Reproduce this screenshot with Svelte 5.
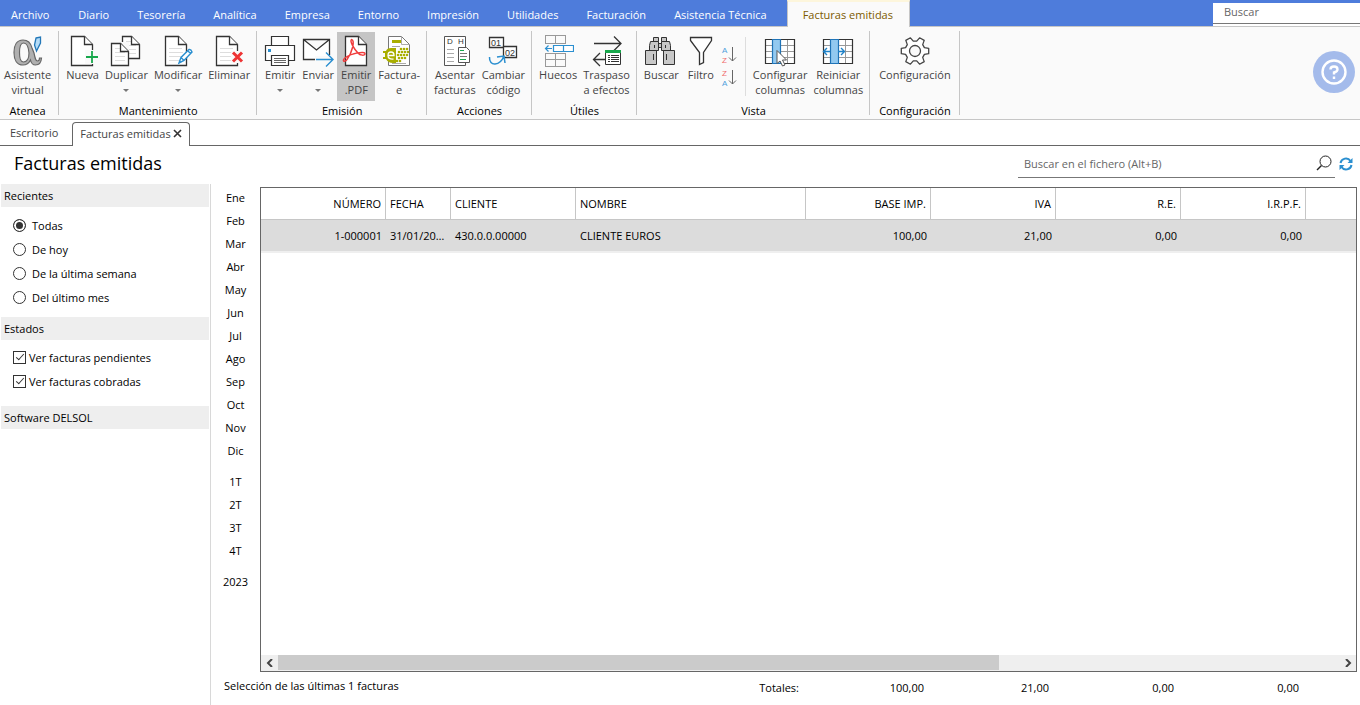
<script>
	const menus = [
		'Archivo', 'Diario', 'Tesorería', 'Analítica', 'Empresa', 'Entorno',
		'Impresión', 'Utilidades', 'Facturación', 'Asistencia Técnica', 'Facturas emitidas'
	];

	const groups = [
		{ name: 'Atenea', items: [
			{ icon: 'alpha', lines: ['Asistente', 'virtual'] }
		] },
		{ name: 'Mantenimiento', items: [
			{ icon: 'new', lines: ['Nueva'] },
			{ icon: 'copy', lines: ['Duplicar'], menu: true },
			{ icon: 'edit', lines: ['Modificar'], menu: true },
			{ icon: 'delete', lines: ['Eliminar'] }
		] },
		{ name: 'Emisión', items: [
			{ icon: 'print', lines: ['Emitir'], menu: true },
			{ icon: 'send', lines: ['Enviar'], menu: true },
			{ icon: 'pdf', lines: ['Emitir', '.PDF'], pressed: true },
			{ icon: 'facturae', lines: ['Factura-', 'e'] }
		] },
		{ name: 'Acciones', items: [
			{ icon: 'post', lines: ['Asentar', 'facturas'] },
			{ icon: 'code', lines: ['Cambiar', 'código'] }
		] },
		{ name: 'Útiles', items: [
			{ icon: 'gaps', lines: ['Huecos'] },
			{ icon: 'transfer', lines: ['Traspaso', 'a efectos'] }
		] },
		{ name: 'Vista', items: [
			{ icon: 'find', lines: ['Buscar'] },
			{ icon: 'filter', lines: ['Filtro'] },
			{ sort: true },
			{ icon: 'columns', lines: ['Configurar', 'columnas'] },
			{ icon: 'reset', lines: ['Reiniciar', 'columnas'] }
		] },
		{ name: 'Configuración', items: [
			{ icon: 'gear', lines: ['Configuración'] }
		] }
	];

	const periods = [
		['Ene', 'Feb', 'Mar', 'Abr', 'May', 'Jun', 'Jul', 'Ago', 'Sep', 'Oct', 'Nov', 'Dic'],
		['1T', '2T', '3T', '4T'],
		['2023']
	];

	const columns = [
		{ key: 'numero', title: 'NÚMERO', width: 125, num: true },
		{ key: 'fecha', title: 'FECHA', width: 65 },
		{ key: 'cliente', title: 'CLIENTE', width: 125 },
		{ key: 'nombre', title: 'NOMBRE', width: 230 },
		{ key: 'base', title: 'BASE IMP.', width: 125, num: true },
		{ key: 'iva', title: 'IVA', width: 125, num: true },
		{ key: 're', title: 'R.E.', width: 125, num: true },
		{ key: 'irpf', title: 'I.R.P.F.', width: 125, num: true }
	];

	const rows = [
		{
			numero: '1-000001', fecha: '31/01/2023', cliente: '430.0.0.00000', nombre: 'CLIENTE EUROS',
			base: '100,00', iva: '21,00', re: '0,00', irpf: '0,00'
		}
	];

	const totals = ['100,00', '21,00', '0,00', '0,00'];
	const recent = ['Todas', 'De hoy', 'De la última semana', 'Del último mes'];

	let activeMenu = $state('Facturas emitidas');
	let period = $state('Todas');
	let pending = $state(true);
	let paid = $state(true);

	// six-toothed gear outline around 16,16
	const gear = [0, 60, 120, 180, 240, 300]
		.flatMap(a => [[a - 20, 10], [a - 11, 14], [a + 11, 14], [a + 20, 10]])
		.map(([a, r]) => {
			const t = a * Math.PI / 180;
			return `${(16 + r * Math.cos(t)).toFixed(1)},${(16 + r * Math.sin(t)).toFixed(1)}`;
		})
		.join(' ');

	// dot matrix on the right of the Factura-e symbol
	const dots = [[18, 14, 3], [16, 17, 4], [15, 20, 4], [16, 23, 3], [14, 26, 2]]
		.flatMap(([x, y, n]) => Array.from({ length: n }, (_, i) => [x + i * 3, y]));
</script>

{#snippet sheet(x, y, w, h, lines)}
	<path d="M{x + .5} {y + .5}H{x + w - 8.5}L{x + w - .5} {y + 8.5}V{y + h - .5}H{x + .5}Z" fill="#fff" stroke="#333" stroke-width="1.3" />
	{#if lines}
		<path d="M{x + 4} {y + h - 17.5}h{w - 9}m{9 - w} 4h{w - 8}m{8 - w} 4h{w - 8}m{8 - w} 4h{w - 8}" stroke="#ddd" />
	{/if}
	<path d="M{x + w - 8.5} {y + .5}V{y + 8.5}H{x + w - .5}" fill="#fff" stroke="#333" stroke-width="1.3" />
{/snippet}

{#snippet icon(name)}
	<svg class="icon" width="32" height="32" viewBox="0 0 32 32" fill="none" aria-hidden="true">
		{#if name === 'alpha'}
			<path
				d="M11 5C17 5 19 9 20 13L22 18C23 23 23.500 26 25.500 26Q27.500 26 27.500 23H29.500Q29 30 23.500 30Q19.500 30 18.500 25Q16 30 11 30C5 30 2 25 2 17.500C2 10 5 5 11 5ZM11.500 8C8 8 7.500 12 7.500 17.500C7.500 23 8 27 11.500 27C15 27 17 23 17 18C16.500 12 15 8 11.500 8Z"
				fill="#b0b0b0" stroke="#666" stroke-width="1.200" fill-rule="evenodd"
			/>
			<path d="M24 3L28.500 2V8L24.500 16L22.500 10Z" fill="#b5dcf7" stroke="#2478b8" stroke-width="1.300" />
		{:else if name === 'new'}
			{@render sheet(4, 1, 22, 30, false)}
			<path d="M18 15h14v14h-14z" fill="#fafafa" />
			<path d="M25 16v12M19 22h12" stroke="#18a84c" stroke-width="1.800" />
		{:else if name === 'copy'}
			{@render sheet(12, 1, 18, 23, true)}
			<path d="M0 7h19v25H0z" fill="#fafafa" />
			{@render sheet(1, 8, 18, 23, true)}
		{:else if name === 'edit'}
			{@render sheet(3, 1, 22, 30, true)}
			<path d="M17 28L19 22.500L27 14.500Q29 14 30 17L22 25.500ZM19 22.500L22 25.500M26 16l3 3" fill="#fff" stroke="#2b8fd0" stroke-width="1.400" />
		{:else if name === 'delete'}
			{@render sheet(3, 1, 22, 30, true)}
			<path d="M18 16h12v12h-12z" fill="#fafafa" />
			<path d="M20 17.500l9 9M29 17.500l-9 9" stroke="#ee3434" stroke-width="3" />
		{:else if name === 'print'}
			<g fill="#fff" stroke="#333" stroke-width="1.200">
				<path d="M7.500 10V1.500h17V10" />
				<path d="M1.500 10.500h29v15h-29z" />
				<path d="M7.500 20.500h17v10h-17z" />
				<path d="M10 23.500h12M10 25.500h12M10 27.500h12" stroke="#666" stroke-width="1" />
			</g>
			<path d="M4 14h3v3H4z" fill="#2b8fd0" />
		{:else if name === 'send'}
			<path d="M15 24.500H1.500V4.500h26V20M1.500 4.500L14.500 15L27.500 4.500" fill="#fff" stroke="#333" stroke-width="1.300" />
			<path d="M13 21h14v6H13z" fill="#fafafa" />
			<path d="M14 24.500h17M24 17.500l7 7l-7 7" stroke="#2b8fd0" stroke-width="1.400" />
		{:else if name === 'pdf'}
			{@render sheet(5, 1, 22, 30, false)}
			<path d="M11.500 4.500C9.500 6 14 14 18 18C20 20.500 25 21 25 18.500C25 16 12 18 5.500 22.500C1.500 25.500 4 28 7 24.500C12 18 15.500 5 11.500 4.500Z" stroke="#f03c3c" stroke-width="1.500" />
		{:else if name === 'facturae'}
			<path d="M5.500 1.500h13l8 8v21h-21z" fill="#fff" stroke="#777" />
			<path d="M18.500 1.500v8h8M9 11.500h8M9 28.500h14" stroke="#aaa" />
			<path d="M9 5h9v3H9z" fill="#a9ae00" />
			<path d="M13 13H8Q4 13 3 16H0v2h2v4H0v2h3q2 4 7 4h3V13Z" fill="#a9ae00" />
			<path d="M5 20.500h6q0-3.500-3-3.500T5 20.500q0 4 5.500 3.500" stroke="#fff" stroke-width="1.300" />
			{#each dots as [x, y]}
				<circle cx={x} cy={y} r="1.300" fill="#a9ae00" />
			{/each}
		{:else if name === 'post'}
			<path d="M5.500 1.500h21v29h-21z" fill="#fff" stroke="#555" />
			<text x="8" y="9">D</text>
			<text x="19" y="9">H</text>
			<path d="M8 14.500h7M8 18.500h7M8 22.500h7M8 26.500h7" stroke="#aaa" />
			<path d="M19.500 12.500h8l3 3v12h-11z" fill="#fff" stroke="#555" />
			<path d="M21 15.500h4M21 24.500h6" stroke="#18a84c" />
			<path d="M21 18.500h7M21 21.500h7" stroke="#777" />
		{:else if name === 'code'}
			<path d="M2.500 2.500h14v10h-14z" fill="#fff" stroke="#333" stroke-width="1.300" />
			<path d="M16.500 11.500h13v11h-13z" fill="#fff" stroke="#333" stroke-width="1.300" />
			<text class="digits" x="4" y="11">01</text>
			<text class="digits" x="18" y="21">02</text>
			<path d="M2.500 22C2 32 13 31 17 21M10 22l7-1l1 7" stroke="#2b8fd0" stroke-width="1.500" />
		{:else if name === 'gaps'}
			<path d="M3 .5h21M3 8.500h21M3.500 0v9M13.500 0v9M23.500 0v9M3.500 19v13M13.500 19v13M23.500 19v13M3 18.500h21M3 24.500h21M3 31.500h21" stroke="#999" />
			<path d="M11.500 10.500h20v6h-20zM21.500 10.500v6" fill="#fff" stroke="#2b8fd0" stroke-width="1.200" />
			<path d="M10 13.500H3.500M6.500 10.500l-3 3l3 3" stroke="#2b8fd0" stroke-width="1.200" />
		{:else if name === 'transfer'}
			<path d="M3 8.500h27M23 1.500l7 7l-7 7" stroke="#333" stroke-width="1.300" />
			<path d="M14 24.500H2.500M9 18l-6.500 6.500L9 31" stroke="#333" stroke-width="1.300" />
			<path d="M14.500 16.500h15v13h-15z" fill="#fff" stroke="#333" />
			<path d="M14 15h16v3H14z" fill="#18a84c" />
			<path d="M17 20.500h2m1 0h8M17 22.500h2m1 0h8M17 24.500h2m1 0h8M17 26.500h2m1 0h8" stroke="#333" />
		{:else if name === 'find'}
			<g fill="#c8c8c8" stroke="#333">
				<path d="M13 8.500h4v4h-4zM8.500 2.500h5v4h-5zM16.500 2.500h5v4h-5z" />
				<path d="M5.500 6.500h8v9h-9v-5zM16.500 6.500h8l1 4v5h-9z" />
				<path d="M.5 15.500h11v14H.5zM18.500 15.500h11v14h-11z" />
				<path d="M9.500 10v3M20.500 10v3M8.500 19v6M21.500 19v6" />
			</g>
		{:else if name === 'filter'}
			<path d="M5.500 2.500h21v3l-8 12v10l-4 2v-12l-9-12z" fill="#fff" stroke="#333" stroke-width="1.300" />
		{:else if name === 'columns' || name === 'reset'}
			<path d="M1.500 4.500h29v24h-29z" fill="#fff" />
			<path d="M1.500 10.500h29M1.500 16.500h29M1.500 22.500h29M23.500 4.500v24" stroke="#999" />
			<path d="M1.500 4.500h29v24h-29z" stroke="#333" stroke-width="1.200" />
			<path d="M8.500 4.500h8v24h-8z" fill="#92c9f0" stroke="#1f74b8" stroke-width="1.200" />
			{#if name === 'columns'}
				<path d="M13 15.500v13l3-2.500l2.500 5l2.500-1l-2.500-5h4z" fill="#fff" stroke="#555" />
			{:else}
				<path d="M8 16.500H2M5 13l-3.500 3.500L5 20M16 16.500h6M19 13l3.500 3.500L19 20" stroke="#1f82c8" stroke-width="1.400" />
			{/if}
		{:else if name === 'gear'}
			<polygon points={gear} fill="#fff" stroke="#444" stroke-width="1.300" stroke-linejoin="round" />
			<circle cx="16" cy="16" r="5.500" fill="#fafafa" stroke="#444" stroke-width="1.300" />
		{/if}
	</svg>
{/snippet}

<div class="app">
	<nav class="menubar">
		{#each menus as m}
			<button class="menu" class:active={activeMenu === m} onclick={() => activeMenu = m}>{m}</button>
		{/each}
		<div class="global-search">
			<input type="text" placeholder="Buscar" aria-label="Buscar" />
		</div>
	</nav>

	<header class="ribbon">
		{#each groups as g}
			<section class="group">
				<div class="items">
					{#each g.items as item}
						{#if item.sort}
							<div class="sorts">
								{#each [['A', 'Z'], ['Z', 'A']] as pair}
									<button aria-label="Ordenar {pair[0]}-{pair[1]}">
										<svg width="16" height="22" viewBox="0 0 16 22" fill="none">
											<text class:red={pair[0] === 'Z'} x="1" y="9">{pair[0]}</text>
											<text class:red={pair[1] === 'Z'} x="1" y="19">{pair[1]}</text>
											<path d="M11.500 3v14M8 13.500l3.500 3.500l3.500-3.500" stroke="#666" />
										</svg>
									</button>
								{/each}
							</div>
						{:else}
							<button class="tool" class:pressed={item.pressed}>
								{@render icon(item.icon)}
								{#each item.lines as line}
									<span>{line}</span>
								{/each}
								{#if item.menu}<i class="caret"></i>{/if}
							</button>
						{/if}
					{/each}
				</div>
				<div class="caption">{g.name}</div>
			</section>
		{/each}
		<button class="help" aria-label="Ayuda">
			<svg width="26" height="26" viewBox="0 0 26 26" fill="none" stroke="#fff" stroke-width="2.400">
				<circle cx="13" cy="13" r="11.500" />
				<path d="M9.500 10.500Q9.500 7.500 13 7.500T16.500 10.500Q16.500 12.500 13 13.500V15.500M13 17.500v2.400" />
			</svg>
		</button>
	</header>

	<div class="tabs">
		<button class="tab">Escritorio</button>
		<button class="tab current">
			Facturas emitidas
			<svg width="9" height="9" viewBox="0 0 9 9"><path d="M1 1l7 7M8 1l-7 7" stroke="#333" stroke-width="1.600" /></svg>
		</button>
		<div class="rest"></div>
	</div>

	<div class="heading">
		<h1>Facturas emitidas</h1>
		<label class="file-search">
			<input type="text" placeholder="Buscar en el fichero (Alt+B)" aria-label="Buscar en el fichero" />
			<svg width="16" height="16" viewBox="0 0 16 16" fill="none" stroke="#222">
				<circle cx="9.500" cy="6.500" r="5.500" />
				<path d="M5.500 10.500L1 15" stroke-width="1.400" />
			</svg>
		</label>
		<button class="refresh" aria-label="Actualizar">
			<svg width="14" height="14" viewBox="0 0 14 14" fill="none" stroke="#2b8fd0" stroke-width="2">
				<path d="M1.500 6A5.500 5.500 0 0 1 11.500 4M12.500 8A5.500 5.500 0 0 1 2.500 10" />
				<path d="M13.500 1v5h-5zM.5 13V8h5z" fill="#2b8fd0" stroke="none" />
			</svg>
		</button>
	</div>

	<main>
		<aside>
			<h2>Recientes</h2>
			<div class="options">
				{#each recent as r}
					<label class="radio"><input type="radio" name="recent" value={r} bind:group={period} />{r}</label>
				{/each}
			</div>
			<h2>Estados</h2>
			<div class="options checks">
				<label><input type="checkbox" bind:checked={pending} />Ver facturas pendientes</label>
				<label><input type="checkbox" bind:checked={paid} />Ver facturas cobradas</label>
			</div>
			<h2>Software DELSOL</h2>
		</aside>

		<div class="content">
			<div class="browse">
				<div class="periods">
					{#each periods as block}
						<div class="block">
							{#each block as p}<button>{p}</button>{/each}
						</div>
					{/each}
				</div>
				<div class="grid">
					<table>
						<colgroup>
							{#each columns as c}<col style:width="{c.width}px" />{/each}
							<col />
						</colgroup>
						<thead>
							<tr>
								{#each columns as c}<th class:num={c.num}>{c.title}</th>{/each}
								<th></th>
							</tr>
						</thead>
						<tbody>
							{#each rows as row}
								<tr>
									{#each columns as c}<td class:num={c.num}>{row[c.key]}</td>{/each}
									<td></td>
								</tr>
							{/each}
						</tbody>
					</table>
					<div class="scrollbar">
						<button aria-label="Izquierda"><svg width="8" height="8" viewBox="0 0 8 8"><path d="M6 0L2 4l4 4" /></svg></button>
						<div class="track"><div class="thumb"></div></div>
						<button aria-label="Derecha"><svg width="8" height="8" viewBox="0 0 8 8"><path d="M2 0l4 4l-4 4" /></svg></button>
					</div>
				</div>
			</div>
			<footer>
				<span class="selection">Selección de las últimas 1 facturas</span>
				<span class="total-label">Totales:</span>
				{#each totals as t}<span class="total">{t}</span>{/each}
			</footer>
		</div>
	</main>
</div>

<style>
	:global(body) {
		background: #fff;
	}

	.app {
		display: flex;
		flex-direction: column;
		min-height: 100vh;
		font-family: "Open Sans", "Noto Sans", sans-serif;
		font-size: 11px;
		line-height: 15px;
		color: #000;
	}

	button, input {
		font: inherit;
		color: inherit;
		margin: 0;
		padding: 0;
		border: 0;
		background: none;
	}

	svg {
		display: block;
		flex: none;
	}

	.menubar {
		display: flex;
		height: 26px;
		background: #4e7cdb;
		border-bottom: 1px solid #c6c6c6;
	}

	.menu {
		padding: 2px 14px 0;
		color: #fff;
		white-space: nowrap;
	}

	.menu:first-child {
		padding: 2px 15px 0 11px;
	}

	.menu.active {
		padding: 0 16px 0 15px;
		margin: 0 0 -1px 6px;
		border: 1px solid #c6c6c6;
		border-top: 2px solid #fdf6dc;
		border-bottom: 0;
		background: #fafafa;
		color: #7d5a00;
	}

	.global-search {
		flex: 0 0 147px;
		margin: 3px 0 0 auto;
		background: #fff;
	}

	.global-search input {
		box-sizing: border-box;
		width: 100%;
		height: 21px;
		padding: 0 11px 3px;
		border-bottom: 1px solid #777;
	}

	input::placeholder {
		color: #666;
		opacity: 1;
	}

	.ribbon {
		display: flex;
		background: #fafafa;
		border-bottom: 1px solid #c6c6c6;
		padding: 4px 0;
	}

	.group {
		display: flex;
		flex-direction: column;
		justify-content: space-between;
		height: 84px;
		padding: 0 3px 0 4px;
		border-right: 1px solid #c6c6c6;
	}

	.group:first-child {
		padding: 0 4px 0 1px;
	}

	.group:last-of-type {
		padding: 0 5px 0 6px;
	}

	.items {
		display: flex;
		padding-top: 1px;
	}

	.tool {
		display: flex;
		flex-direction: column;
		align-items: center;
		box-sizing: border-box;
		min-width: 38px;
		height: 69px;
		padding: 3px 3px 0;
		color: #444;
		white-space: nowrap;
	}

	.tool.pressed {
		background: #c5c5c5;
	}

	.icon text {
		font-family: "Liberation Sans", sans-serif;
		font-size: 8px;
		fill: #333;
	}

	.icon .digits {
		font-size: 9px;
	}

	.caret {
		margin-top: 7px;
		border: 3px solid transparent;
		border-top-color: #777;
		border-bottom: 0;
	}

	.sorts {
		display: flex;
		flex-direction: column;
		align-self: flex-start;
		gap: 1px;
		height: 52px;
		margin: 5px 4px 0 0;
		padding: 7px 8px 0 1px;
		border-right: 1px solid #ddd;
	}

	.sorts text {
		font-family: "Liberation Sans", sans-serif;
		font-size: 8px;
		fill: #4da0dc;
	}

	.sorts .red {
		fill: #f06a6a;
	}

	.caption {
		line-height: 9px;
		text-align: center;
	}

	.help {
		display: grid;
		place-items: center;
		width: 42px;
		height: 42px;
		margin: 20px 5px 0 auto;
		border-radius: 50%;
		background: #a4bbeb;
	}

	.tabs {
		display: flex;
		height: 24px;
		padding-top: 2px;
	}

	.tab {
		padding: 0 14px 2px 10px;
		border-bottom: 1px solid #666;
		color: #444;
	}

	.tab.current {
		display: flex;
		align-items: center;
		gap: 2px;
		padding: 0 7px 2px;
		border: 1px solid #666;
		border-bottom: 0;
		border-radius: 4px 4px 0 0;
	}

	.rest {
		flex: 1;
		border-bottom: 1px solid #666;
	}

	.heading {
		display: flex;
		align-items: flex-start;
		box-sizing: border-box;
		height: 38px;
		padding: 4px 7px 0 0;
	}

	h1 {
		margin: 0 auto 0 14px;
		font-size: 18px;
		line-height: 26px;
		font-weight: 400;
	}

	.file-search {
		display: flex;
		align-items: center;
		box-sizing: border-box;
		width: 317px;
		height: 28px;
		padding: 0 3px 1px 6px;
		margin-right: 4px;
		border-bottom: 1px solid #777;
	}

	.file-search input {
		flex: 1;
	}

	.refresh {
		padding-top: 7px;
	}

	main {
		display: flex;
		flex: 1;
	}

	aside {
		flex: 0 0 210px;
		border-right: 1px solid #d8d8d8;
	}

	h2 {
		margin: 0 1px;
		padding: 4px 3px;
		background: #eee;
		font-size: 11px;
		line-height: 15px;
		font-weight: 400;
	}

	.options {
		display: flex;
		flex-direction: column;
		padding: 6px 13px 8px;
	}

	.checks {
		padding: 5px 13px 13px;
	}

	.options label {
		display: flex;
		align-items: center;
		gap: 3px;
		height: 24px;
	}

	.options .radio {
		gap: 6px;
	}

	.options input {
		appearance: none;
		box-sizing: border-box;
		width: 13px;
		height: 13px;
		border: 1px solid #333;
		background: #fff;
	}

	.options input[type="radio"] {
		border-radius: 50%;
	}

	.options input[type="radio"]:checked {
		background: #333;
		box-shadow: inset 0 0 0 2px #fff;
	}

	.options input[type="checkbox"]:checked::before {
		content: "";
		display: block;
		width: 3px;
		height: 7px;
		margin: 0 0 0 4px;
		border: solid #333;
		border-width: 0 1px 1px 0;
		transform: rotate(42deg);
	}

	.content {
		display: flex;
		flex: 1;
		flex-direction: column;
		min-width: 0;
	}

	.browse {
		display: flex;
		flex: 1;
		padding-right: 3px;
	}

	.periods {
		display: flex;
		flex: 0 0 49px;
		flex-direction: column;
		gap: 8px;
		padding-top: 2px;
	}

	.block {
		display: flex;
		flex-direction: column;
	}

	.block button {
		height: 23px;
	}

	.grid {
		display: flex;
		flex: 1;
		flex-direction: column;
		min-width: 0;
		margin-top: 3px;
		border: 1px solid #666;
	}

	table {
		width: 100%;
		table-layout: fixed;
		border-collapse: separate;
		border-spacing: 0;
	}

	th, td {
		height: 31px;
		padding: 0 4px;
		overflow: hidden;
		font-weight: 400;
		text-align: left;
		text-overflow: ellipsis;
		white-space: nowrap;
	}

	th {
		border-right: 1px solid #c6c6c6;
		border-bottom: 1px solid #c6c6c6;
	}

	th:last-child {
		border-right: 0;
	}

	td {
		background: #dcdcdc;
		border-bottom: 2px solid #efefef;
	}

	.num {
		text-align: right;
	}

	.scrollbar {
		display: flex;
		height: 16px;
		margin-top: auto;
		background: #efefef;
	}

	.scrollbar button {
		display: grid;
		place-items: center;
		width: 17px;
	}

	.scrollbar path {
		fill: none;
		stroke: #444;
		stroke-width: 2;
	}

	.track {
		flex: 1;
	}

	.thumb {
		width: 68%;
		height: 15px;
		background: #cbcbcb;
	}

	footer {
		display: flex;
		box-sizing: border-box;
		height: 33px;
		padding: 6px 0 0 13px;
	}

	.selection {
		flex: 0 0 490px;
	}

	.total-label {
		flex: 0 0 85px;
		text-align: right;
	}

	.total {
		flex: 0 0 125px;
		text-align: right;
	}

	footer > :not(.selection) {
		padding-top: 2px;
	}
</style>
